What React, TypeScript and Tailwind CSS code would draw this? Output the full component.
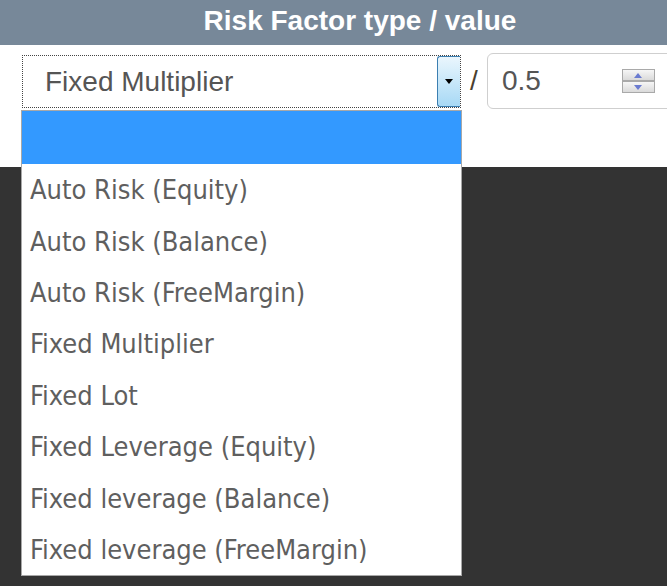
const options = [
  "Auto Risk (Equity)",
  "Auto Risk (Balance)",
  "Auto Risk (FreeMargin)",
  "Fixed Multiplier",
  "Fixed Lot",
  "Fixed Leverage (Equity)",
  "Fixed leverage (Balance)",
  "Fixed leverage (FreeMargin)",
];

function SpinButton({ up }: { up?: boolean }) {
  return (
    <div className="flex h-[12px] w-[33px] items-center justify-center border border-[#a9a9a9] bg-gradient-to-b from-[#f6f6f6] to-[#dadada]">
      <svg width="8" height="5" viewBox="0 0 8 5">
        {up ? <path d="M0 5 L4 0 L8 5 Z" fill="#6a7bd0" /> : <path d="M0 0 L4 5 L8 0 Z" fill="#6a7bd0" />}
      </svg>
    </div>
  );
}

export default function App() {
  return (
    <div className="relative h-[586px] w-[667px] overflow-hidden bg-[#333333] font-['Liberation_Sans',Arial,sans-serif]">
      {/* header */}
      <div className="flex h-[45px] w-[720px] items-center justify-center bg-[#778899] pb-[4px] text-[28px] font-bold leading-none text-white">
        Risk Factor type / value
      </div>

      {/* form row */}
      <div className="flex h-[122px] items-start bg-white pl-[22px] pt-[8px]">
        <div className="mt-[2px] flex h-[53px] w-[439px] shrink-0 border border-dotted border-[#444]">
          <div className="flex flex-1 items-center pl-[22px] text-[28px] text-[#555]">Fixed Multiplier</div>
          <div className="flex w-[23px] items-center justify-center rounded-l-[3px] border border-r-0 border-[#3c7fb1] bg-gradient-to-b from-[#eaf6fd] to-[#a7d9f5]">
            <svg width="8" height="5" viewBox="0 0 8 5">
              <path d="M0 0 L8 0 L4 5 Z" fill="#000" />
            </svg>
          </div>
        </div>
        <div className="ml-[9px] mt-[14px] w-[8px] shrink-0 text-[28px] leading-none text-[#4a3f30]">/</div>
        <div className="ml-[9px] flex h-[56px] w-[220px] shrink-0 items-center rounded-[6px] border border-[#cfcfcf] pl-[14px]">
          <span className="text-[28px] text-[#555]">0.5</span>
          <div className="ml-[81px] flex flex-col">
            <SpinButton up />
            <SpinButton />
          </div>
        </div>
      </div>

      {/* open dropdown list */}
      <div className="absolute left-[21px] top-[110px] w-[441px] border border-[#a8a8a8] bg-white font-['DejaVu_Sans_Condensed','DejaVu_Sans',sans-serif] text-[27px] text-[#5f5f5f]">
        <div className="h-[53px] bg-[#3399ff]" />
        {options.map((o) => (
          <div key={o} className="flex h-[51.4px] items-center pl-[8px] leading-none">
            {o}
          </div>
        ))}
      </div>
    </div>
  );
}
